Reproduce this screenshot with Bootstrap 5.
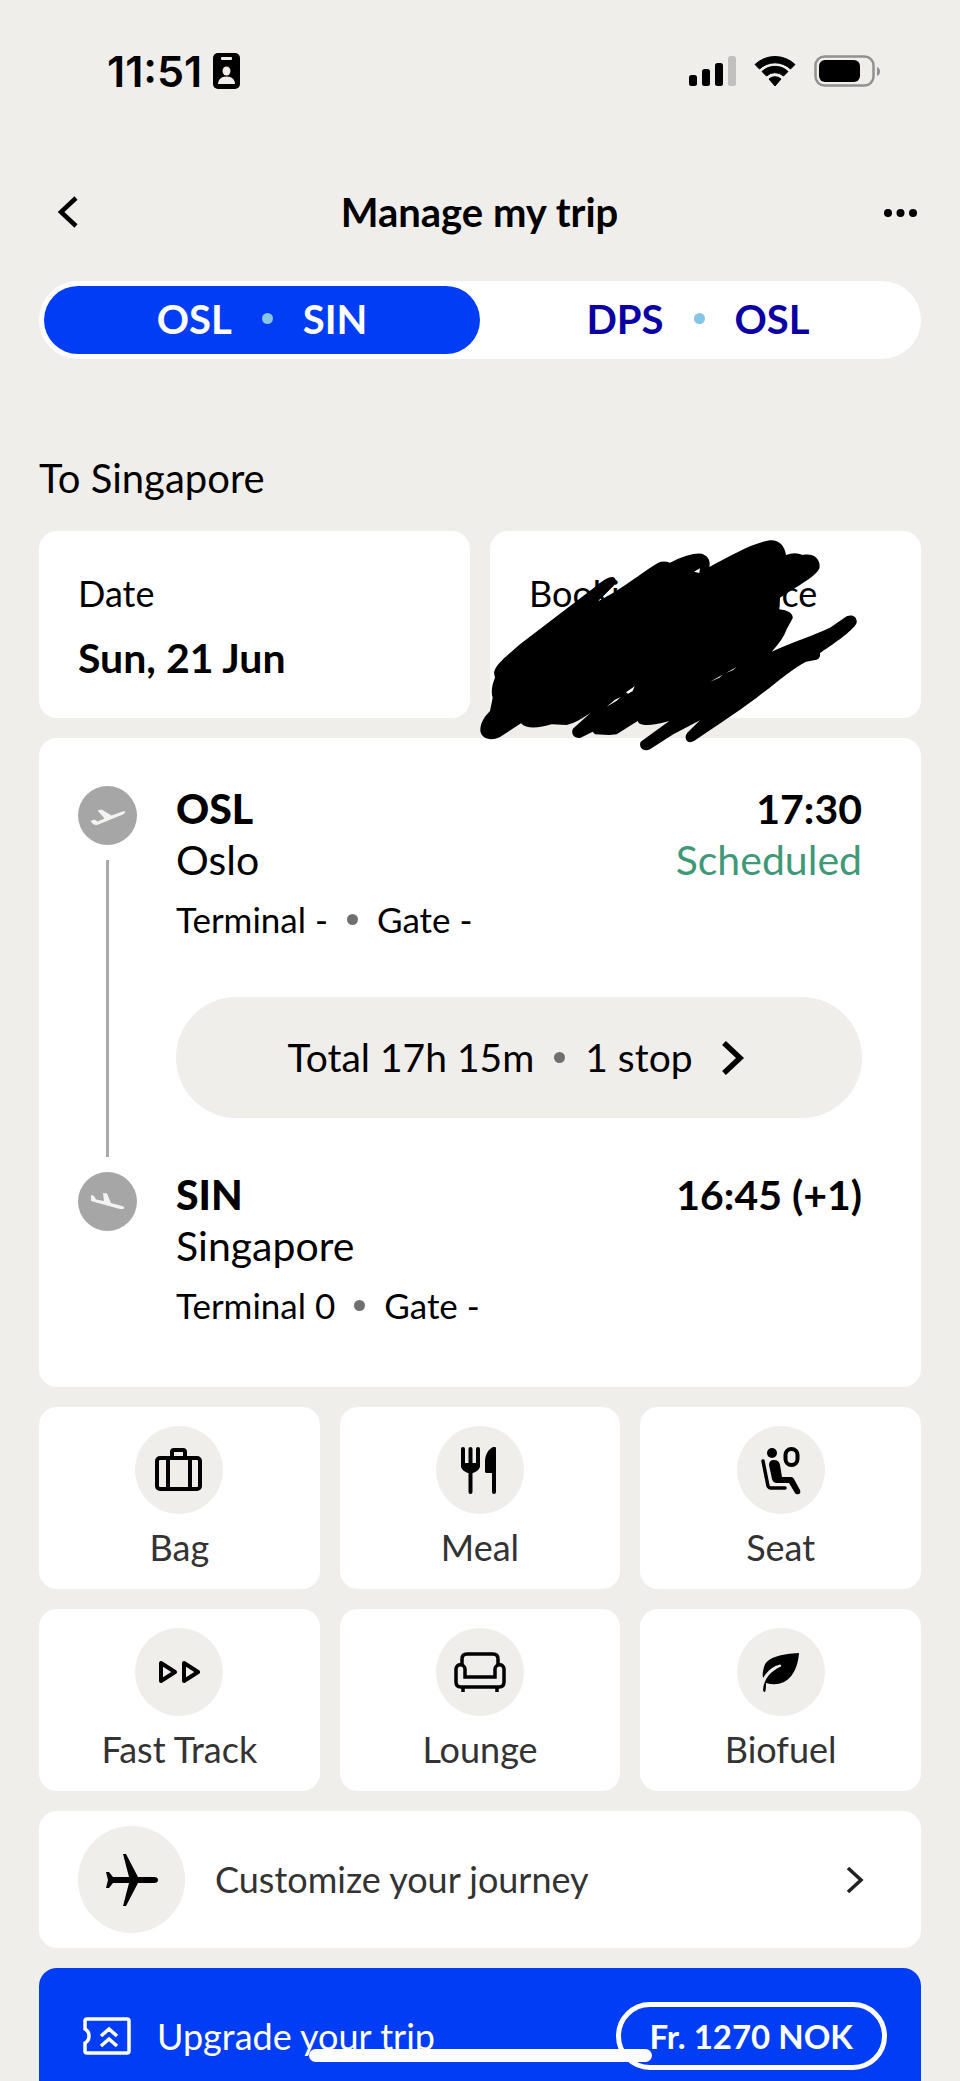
<!DOCTYPE html>
<html lang="en">
<head>
<meta charset="utf-8">
<meta name="viewport" content="width=device-width, initial-scale=1">
<title>Manage my trip</title>
<link href="https://cdn.jsdelivr.net/npm/bootstrap@5.3.0/dist/css/bootstrap.min.css" rel="stylesheet">
<style>
  :root { --sand: #f0eeeb; --royal: #003df5; --navy: #0a00a3; --ink: #333; }
  body { background: var(--sand); color: #000; font-family: Lato, "Noto Sans", sans-serif; font-size: 41px; line-height: 51px; }
  .page { padding: 53px 39px 0; }
  .status { height: 36px; padding: 0 40px 0 68px; }
  .status-group { gap: 18px; }
  .clock-group { gap: 11px; }
  .clock { font: 600 43px/36px Inter, sans-serif; }
  .head { margin-top: 93px; height: 60px; }
  .head h1 { font-size: 40px; line-height: 60px; }
  .icon-btn { background: none; border: 0; padding: 0 3px 0 0; line-height: 0; color: #000; }
  .back-btn { padding: 0 0 0 18px; }
  .switch { margin-top: 39px; height: 78px; padding: 5px; }
  .leg-btn { border: 0; background: transparent; color: var(--navy); font-size: 40px; line-height: 64px; padding-bottom: 4px; font-weight: 700; border-radius: 34px; gap: 30px; }
  .leg-btn.active { background: var(--royal); color: #fff; }
  .dot { width: 11px; height: 11px; border-radius: 50%; background: #6f6f6f; flex: none; }
  .dot-sky { background: #86c5e4; }
  .dest { margin: 93px 0 27px; font-size: 40px; line-height: 52px; font-weight: 400; }
  .stack { gap: 20px; }
  .tile { background: #fff; border-radius: 18px; }
  .info { padding: 42px 39px 36px; }
  .label-text { font-size: 36px; line-height: 40px; }
  .value-text { margin-top: 20px; line-height: 49px; font-weight: 700; }
  .scribble { left: -20px; top: 0; width: 400px; height: 225px; z-index: 2; }
  .trip { padding: 45px 59px 58px 39px; }
  .trip-row { gap: 39px; }
  .rail { width: 59px; padding-top: 3px; flex: none; }
  .rail-line { width: 3px; background: #a9a9a9; margin: 15px 0 12px; }
  .code { font-weight: 900; }
  .time { font-weight: 700; }
  .gate { margin-top: 10px; font-size: 35px; line-height: 48px; gap: 19px; }
  .on-time { color: #3f9877; }
  .total { margin: 54px 0 51px; height: 121px; border: 0; border-radius: 61px; background: var(--sand); gap: 20px; color: #000; font-size: 39px; }
  .service { border: 0; padding: 19px 0 20px; color: var(--ink); font-size: 36px; line-height: 44px; text-decoration: none; }
  .disc { width: 88px; height: 88px; border-radius: 50%; background: var(--sand); color: #000; margin-bottom: 11px; }
  .services { --bs-gutter-x: 20px; --bs-gutter-y: 20px; }
  .custom { padding: 15px 57px 15px 39px; gap: 30px; font-size: 36px; color: var(--ink); text-decoration: none; }
  .disc-lg { width: 107px; height: 107px; margin: 0; }
  .upgrade { background: var(--royal); color: #fff; border-radius: 18px 18px 0 0; padding: 34px 34px 10px 44px; font-size: 36px; }
  .upgrade-label { gap: 26px; height: 68px; }
  .price { height: 68px; border: 5px solid #fff; border-radius: 34px; background: transparent; color: #fff; font-size: 33px; font-weight: 700; padding: 0 29px; line-height: 58px; }
  .home-bar { bottom: 19px; left: 50%; margin-left: -171px; width: 343px; height: 13px; border-radius: 7px; background: #fff; z-index: 5; }
  svg { display: block; flex: none; }
</style>
</head>
<body>
<div class="page d-flex flex-column min-vh-100">
  <div class="status d-flex align-items-center justify-content-between">
    <div class="clock-group d-flex align-items-center">
      <span class="clock">11:51</span>
      <svg width="27" height="36" viewBox="0 0 27 36"><rect width="27" height="36" rx="5"/><rect x="8" y="4" width="11" height="3" rx="1" fill="#f0eeeb"/><ellipse cx="13.500" cy="18" rx="4" ry="4.500" fill="#f0eeeb"/><path d="M5 31c0-4 3-7.500 8.500-7.500S22 27 22 31z" fill="#f0eeeb"/></svg>
    </div>
    <div class="status-group d-flex align-items-center">
      <svg width="47" height="30" viewBox="0 0 47 30"><rect y="19" width="8" height="11" rx="2.500"/><rect x="13" y="13" width="8" height="17" rx="2.500"/><rect x="26" y="7" width="8" height="23" rx="2.500"/><rect x="39" width="8" height="30" rx="2.500" fill="#c1c0be"/></svg>
      <svg width="42" height="30" viewBox="0 0 42 30"><path d="M1 8.500A29 29 0 0 1 41 8.500L36.500 13A22.500 22.500 0 0 0 5.500 13ZM8 15.500A19 19 0 0 1 34 15.500L29.500 20A12.500 12.500 0 0 0 12.500 20ZM15 23A9 9 0 0 1 27 23L21 30Z" stroke="#000" stroke-width="1" stroke-linejoin="round"/></svg>
      <svg width="67" height="32" viewBox="0 0 67 32"><rect x="1.500" y="1.500" width="58" height="29" rx="9" fill="none" stroke="#929190" stroke-width="2.500"/><rect x="5" y="5" width="41" height="22" rx="6"/><path d="M63 12q3 1 3 4.500t-3 4.500z" fill="#929190"/></svg>
    </div>
  </div>

  <header class="head d-flex align-items-center justify-content-between">
    <button class="icon-btn back-btn" aria-label="Back"><svg width="22" height="32" viewBox="0 0 22 32" fill="none" stroke="#000" stroke-width="4.500"><path d="M19 2 4 16l15 14"/></svg></button>
    <h1 class="m-0 fw-bold">Manage my trip</h1>
    <button class="icon-btn" aria-label="More options"><svg width="38" height="10" viewBox="0 0 38 10"><circle cx="8" cy="6" r="4"/><circle cx="20.500" cy="6" r="4"/><circle cx="33" cy="6" r="4"/></svg></button>
  </header>

  <div class="switch bg-white rounded-pill d-flex">
    <button class="leg-btn active flex-fill w-50 d-flex align-items-center justify-content-center">OSL <span class="dot dot-sky"></span> SIN</button>
    <button class="leg-btn flex-fill w-50 d-flex align-items-center justify-content-center">DPS <span class="dot dot-sky"></span> OSL</button>
  </div>

  <h2 class="dest">To Singapore</h2>

  <main class="stack d-flex flex-column flex-fill">
    <div class="row services">
      <div class="col-6"><div class="tile info h-100">
        <div class="label-text">Date</div>
        <div class="value-text">Sun, 21 Jun</div>
      </div></div>
      <div class="col-6"><div class="tile info h-100 position-relative">
        <div class="label-text">Booking reference</div>
        <svg class="scribble position-absolute" viewBox="0 0 1200 675" aria-hidden="true">
          <path d="M72 425C76 400 110 375 150 340L370 172C395 150 415 137 428 138C442 142 440 158 425 170L382 212L430 185C480 155 530 115 565 95Q580 88 600 95Q660 65 695 68C715 74 722 90 718 108C780 75 850 35 900 28C925 26 944 42 948 72Q975 62 998 72C1030 66 1050 82 1049 108C1046 130 1000 155 930 200L928 235C955 238 970 248 968 262L950 295Q940 325 905 362C960 335 1040 310 1080 290L1130 256C1148 248 1162 258 1160 275C1150 300 1080 345 1050 366Q1052 382 1040 386L1008 392C970 410 920 455 860 500C800 545 730 590 672 630C650 642 640 620 652 605L690 568L610 610L540 655C520 664 505 650 512 632L598 570Q550 584 525 582Q505 580 503 570L440 610L418 612L375 610L368 602L332 620C308 625 300 600 312 590L362 545Q320 575 290 582L245 580C210 590 170 596 153 577L90 618C60 632 35 622 31 600C30 575 45 555 60 540L68 500Q60 475 75 440Z"/>
          <path d="M672 122L690 112L688 126ZM410 527L435 506L452 498L440 509ZM468 484L494 466L488 480L474 488ZM720 452L758 431L748 440ZM768 426L800 408L788 418Z" fill="#fff"/>
        </svg>
      </div></div>
    </div>

    <section class="tile trip">
      <div class="trip-row d-flex">
        <div class="rail d-flex flex-column align-items-center">
          <svg width="59" height="59" viewBox="0 0 59 59"><circle cx="29.500" cy="29.500" r="29.500" fill="#a6a6a6"/><path d="M12.500 35l4-1.500 3 2 7-3-7-8 4-1 10 6 11-4q3-.500 3 .500-1 2-5 3.500L19 39q-3 0-4-1z" fill="#f4f3f1"/></svg>
          <div class="rail-line flex-fill"></div>
        </div>
        <div class="flex-fill">
          <div class="d-flex justify-content-between"><span class="code">OSL</span><span class="time">17:30</span></div>
          <div class="d-flex justify-content-between"><span>Oslo</span><span class="on-time">Scheduled</span></div>
          <div class="gate d-flex align-items-center"><span>Terminal -</span><span class="dot"></span><span>Gate -</span></div>
          <button class="total w-100 d-flex align-items-center justify-content-center"><span>Total 17h 15m</span><span class="dot"></span><span>1 stop</span><svg width="38" height="34" viewBox="0 0 38 34" fill="none" stroke="#000" stroke-width="5.500"><path d="M11 2 27 17 11 32"/></svg></button>
        </div>
      </div>
      <div class="trip-row d-flex">
        <div class="rail">
          <svg width="59" height="59" viewBox="0 0 59 59"><circle cx="29.500" cy="29.500" r="29.500" fill="#a6a6a6"/><path d="M13 23l3 1 2 3.500 8 1.500-1-8 4 .500 4 9.500 11 3q3 1 2 2.500-2 1-6 0L13 29z" fill="#f4f3f1"/></svg>
        </div>
        <div class="flex-fill">
          <div class="d-flex justify-content-between"><span class="code">SIN</span><span class="time">16:45 (+1)</span></div>
          <div>Singapore</div>
          <div class="gate d-flex align-items-center"><span>Terminal 0</span><span class="dot"></span><span>Gate -</span></div>
        </div>
      </div>
    </section>

    <div class="row row-cols-3 services">
      <div class="col"><a href="#bag" class="service tile d-flex flex-column align-items-center"><span class="disc d-flex align-items-center justify-content-center"><svg width="48" height="44" viewBox="0 0 48 44" fill="none" stroke="#000" stroke-width="4"><rect x="2" y="10" width="43" height="31" rx="3"/><path d="M13 10v31M35 10v31M17 10V4q0-2 2-2h9q2 0 2 2v6"/></svg></span>Bag</a></div>
      <div class="col"><a href="#meal" class="service tile d-flex flex-column align-items-center"><span class="disc d-flex align-items-center justify-content-center"><svg width="38" height="50" viewBox="0 0 38 50" fill="none" stroke="#000" stroke-width="4" stroke-linecap="round"><path d="M2 4v17M9.500 4v43M17 4v17M33 4v43"/><path d="M0 18h19v2c0 5-4 7-7 8H7c-3-1-7-3-7-8zM35 3v25H26c-1 0-2 0-2-2V17C24 9 28 3 33 2q2 0 2 1z" fill="#000" stroke="none"/></svg></span>Meal</a></div>
      <div class="col"><a href="#seat" class="service tile d-flex flex-column align-items-center"><span class="disc d-flex align-items-center justify-content-center"><svg width="42" height="50" viewBox="0 0 42 50" fill="none" stroke="#000" stroke-linecap="round" stroke-linejoin="round"><circle cx="12" cy="8" r="5" fill="#000" stroke="none"/><path d="M3 16l5 25q1 2 3 2h14" stroke-width="3.500"/><rect x="25.500" y="4" width="12" height="16" rx="6" stroke-width="4"/><path d="M9 20q0-5 5-5 5 0 6 5l2 12h9q2 0 3 2l6 11q1 3-1 4-3 1-4-1l-6-10H17q-4 0-5-4z" fill="#000" stroke="none"/></svg></span>Seat</a></div>
      <div class="col"><a href="#fast-track" class="service tile d-flex flex-column align-items-center"><span class="disc d-flex align-items-center justify-content-center"><svg width="42" height="24" viewBox="0 0 42 24" fill="none" stroke="#000" stroke-width="4" stroke-linejoin="round"><path d="M3 3v18l14-9zM26 3v18l14-9z"/></svg></span>Fast Track</a></div>
      <div class="col"><a href="#lounge" class="service tile d-flex flex-column align-items-center"><span class="disc d-flex align-items-center justify-content-center"><svg width="52" height="40" viewBox="0 0 52 40" fill="none" stroke="#000" stroke-width="3.500"><path d="M8 13V7q0-5 5-5h26q5 0 5 5v6"/><path d="M11 25V17c0-5-9-6-9 0v13q0 5 5 5h38q5 0 5-5V17c0-6-9-5-9 0v8zM9 35v5M43 35v5"/></svg></span>Lounge</a></div>
      <div class="col"><a href="#biofuel" class="service tile d-flex flex-column align-items-center"><span class="disc d-flex align-items-center justify-content-center"><svg width="38" height="40" viewBox="0 0 38 40"><path d="M37 1C19 2 5 5 2 15Q0 20 1 26C6 18 12 14 18 12.500q2 .500 1 2C9 19 2 26 1 38q0 2 2 2 1-1 1-9C22 36 35 25 37 1z"/></svg></span>Biofuel</a></div>
    </div>

    <a href="#customize" class="tile custom d-flex align-items-center">
      <span class="disc disc-lg d-flex align-items-center justify-content-center"><svg width="52" height="52" viewBox="0 0 52 52"><path d="M17 0h3l12 23h16q4 0 4 3t-4 3H32L20 52h-3l6-23H7L3 34H0l2-8-2-8h3l4 5h16z"/></svg></span>
      <span class="flex-fill">Customize your journey</span>
      <svg width="20" height="28" viewBox="0 0 20 28" fill="none" stroke="#222" stroke-width="3.500"><path d="M4 2 17 14 4 26"/></svg>
    </a>

    <section class="upgrade flex-fill d-flex align-items-start">
      <div class="upgrade-label d-flex align-items-center flex-fill">
        <svg width="48" height="38" viewBox="0 0 48 38" fill="none" stroke="#fff" stroke-width="3.500"><path d="M2 4q0-2 2-2h40q2 0 2 2v30q0 2-2 2H4q-2 0-2-2v-8q4-2 4-7t-4-7z"/><path d="M18 19l8-7 8 7M18 29l8-7 8 7"/></svg>
        <span>Upgrade your trip</span>
      </div>
      <button class="price">Fr. 1270 NOK</button>
    </section>
  </main>
</div>
<div class="home-bar position-fixed"></div>
<script src="https://cdn.jsdelivr.net/npm/bootstrap@5.3.0/dist/js/bootstrap.bundle.min.js"></script>
</body>
</html>
